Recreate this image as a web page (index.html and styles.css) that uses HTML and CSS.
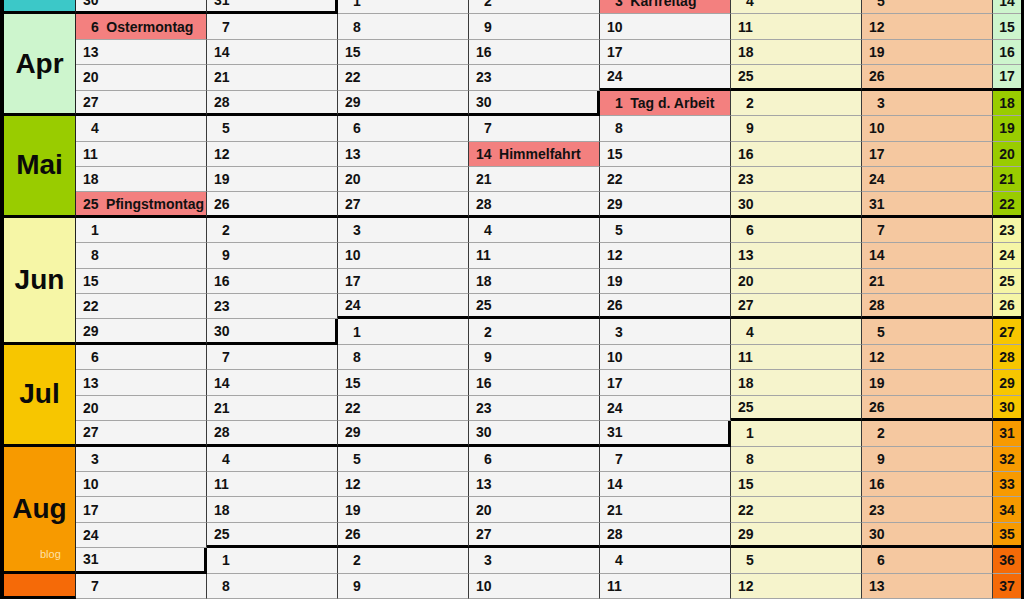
FILE: index.html
```html
<!DOCTYPE html>
<html lang="de">
<head>
<meta charset="utf-8">
<title>Kalender 2015</title>
<link rel="stylesheet" href="styles.css">
</head>
<body>
<div class="cal">
  <!-- KW 14 -->
  <div class="m mar"></div>
  <div class="c bb">30</div><div class="c bb br">31</div><div class="c s">1</div><div class="c s">2</div><div class="c s h">3<span class="hn">Karfreitag</span></div><div class="c s sa">4</div><div class="c s su">5</div><div class="w apr">14</div>
  <!-- April -->
  <div class="m apr r4">Apr</div>
  <div class="c s h">6<span class="hn">Ostermontag</span></div><div class="c s">7</div><div class="c s">8</div><div class="c s">9</div><div class="c">10</div><div class="c sa">11</div><div class="c su">12</div><div class="w apr">15</div>
  <div class="c">13</div><div class="c">14</div><div class="c">15</div><div class="c">16</div><div class="c">17</div><div class="c sa">18</div><div class="c su">19</div><div class="w apr">16</div>
  <div class="c">20</div><div class="c">21</div><div class="c">22</div><div class="c">23</div><div class="c bb">24</div><div class="c sa bb">25</div><div class="c su bb">26</div><div class="w apr bb">17</div>
  <div class="c bb">27</div><div class="c bb">28</div><div class="c bb">29</div><div class="c bb br">30</div><div class="c s h">1<span class="hn">Tag d. Arbeit</span></div><div class="c s sa">2</div><div class="c s su">3</div><div class="w mai">18</div>
  <!-- Mai -->
  <div class="m mai r4">Mai</div>
  <div class="c s">4</div><div class="c s">5</div><div class="c s">6</div><div class="c s">7</div><div class="c s">8</div><div class="c s sa">9</div><div class="c su">10</div><div class="w mai">19</div>
  <div class="c">11</div><div class="c">12</div><div class="c">13</div><div class="c h">14<span class="hn">Himmelfahrt</span></div><div class="c">15</div><div class="c sa">16</div><div class="c su">17</div><div class="w mai">20</div>
  <div class="c">18</div><div class="c">19</div><div class="c">20</div><div class="c">21</div><div class="c">22</div><div class="c sa">23</div><div class="c su">24</div><div class="w mai">21</div>
  <div class="c h bb">25<span class="hn">Pfingstmontag</span></div><div class="c bb">26</div><div class="c bb">27</div><div class="c bb">28</div><div class="c bb">29</div><div class="c sa bb">30</div><div class="c su bb">31</div><div class="w mai bb">22</div>
  <!-- Juni -->
  <div class="m jun r5">Jun</div>
  <div class="c s">1</div><div class="c s">2</div><div class="c s">3</div><div class="c s">4</div><div class="c s">5</div><div class="c s sa">6</div><div class="c s su">7</div><div class="w jun">23</div>
  <div class="c s">8</div><div class="c s">9</div><div class="c">10</div><div class="c">11</div><div class="c">12</div><div class="c sa">13</div><div class="c su">14</div><div class="w jun">24</div>
  <div class="c">15</div><div class="c">16</div><div class="c">17</div><div class="c">18</div><div class="c">19</div><div class="c sa">20</div><div class="c su">21</div><div class="w jun">25</div>
  <div class="c">22</div><div class="c">23</div><div class="c bb">24</div><div class="c bb">25</div><div class="c bb">26</div><div class="c sa bb">27</div><div class="c su bb">28</div><div class="w jun bb">26</div>
  <div class="c bb">29</div><div class="c bb br">30</div><div class="c s">1</div><div class="c s">2</div><div class="c s">3</div><div class="c s sa">4</div><div class="c s su">5</div><div class="w jul">27</div>
  <!-- Juli -->
  <div class="m jul r4">Jul</div>
  <div class="c s">6</div><div class="c s">7</div><div class="c s">8</div><div class="c s">9</div><div class="c">10</div><div class="c sa">11</div><div class="c su">12</div><div class="w jul">28</div>
  <div class="c">13</div><div class="c">14</div><div class="c">15</div><div class="c">16</div><div class="c">17</div><div class="c sa">18</div><div class="c su">19</div><div class="w jul">29</div>
  <div class="c">20</div><div class="c">21</div><div class="c">22</div><div class="c">23</div><div class="c">24</div><div class="c sa bb">25</div><div class="c su bb">26</div><div class="w jul bb">30</div>
  <div class="c bb">27</div><div class="c bb">28</div><div class="c bb">29</div><div class="c bb">30</div><div class="c bb br">31</div><div class="c s sa">1</div><div class="c s su">2</div><div class="w aug">31</div>
  <!-- August -->
  <div class="m aug r5">Aug<span class="blog">blog</span></div>
  <div class="c s">3</div><div class="c s">4</div><div class="c s">5</div><div class="c s">6</div><div class="c s">7</div><div class="c s sa">8</div><div class="c s su">9</div><div class="w aug">32</div>
  <div class="c">10</div><div class="c">11</div><div class="c">12</div><div class="c">13</div><div class="c">14</div><div class="c sa">15</div><div class="c su">16</div><div class="w aug">33</div>
  <div class="c">17</div><div class="c">18</div><div class="c">19</div><div class="c">20</div><div class="c">21</div><div class="c sa">22</div><div class="c su">23</div><div class="w aug">34</div>
  <div class="c">24</div><div class="c bb">25</div><div class="c bb">26</div><div class="c bb">27</div><div class="c bb">28</div><div class="c sa bb">29</div><div class="c su bb">30</div><div class="w aug bb">35</div>
  <div class="c bb br">31</div><div class="c s">1</div><div class="c s">2</div><div class="c s">3</div><div class="c s">4</div><div class="c s sa">5</div><div class="c s su">6</div><div class="w sep">36</div>
  <!-- September -->
  <div class="m sep"></div>
  <div class="c s">7</div><div class="c s">8</div><div class="c s">9</div><div class="c">10</div><div class="c">11</div><div class="c sa">12</div><div class="c su">13</div><div class="w sep">37</div>
</div>
</body>
</html>
```

FILE: styles.css
```css
html, body {
  margin: 0;
  padding: 0;
  height: 600px;
  overflow: hidden;
  background: #ffffff;
}

body {
  font-family: "Liberation Sans", Arial, sans-serif;
}

.cal {
  display: grid;
  grid-template-columns: 72px repeat(7, 131px) 28px;
  grid-template-rows: repeat(24, 25.43px);
  border-left: 4px solid #000;
  border-right: 3px solid #000;
  margin-top: -11px;
  font-weight: bold;
  font-size: 14px;
  color: #111;
}

.c {
  box-sizing: border-box;
  display: flex;
  align-items: center;
  padding-left: 7px;
  background: #f4f4f4;
  border-right: 1px solid #3a3a3a;
  border-bottom: 1px solid #a5a5a5;
  white-space: nowrap;
  overflow: hidden;
}

.s { padding-left: 15px; }

.sa { background: #f6f4cc; }
.su { background: #f5c8a0; }
.h { background: #f3807f; }

.hn { margin-left: 7.5px; }

.w {
  box-sizing: border-box;
  display: flex;
  align-items: center;
  justify-content: center;
  border-bottom: 1px solid #a5a5a5;
}

.m {
  box-sizing: border-box;
  position: relative;
  display: flex;
  align-items: center;
  justify-content: center;
  font-size: 28px;
  color: #0a0a0a;
  border-right: 1px solid #222;
  border-bottom: 3px solid #000;
}

.r4 { grid-row: span 4; }
.r5 { grid-row: span 5; }

.bb { border-bottom: 3px solid #000; }
.br { border-right: 3px solid #000; }

.mar { background: #3cc8c8; }
.apr { background: #cdf5cd; }
.mai { background: #99cc00; }
.jun { background: #f6f6a6; }
.jul { background: #f7c600; }
.aug { background: #f79a00; }
.sep { background: #f56a08; }

.blog {
  position: absolute;
  left: 36px;
  bottom: 11px;
  font-size: 11px;
  font-weight: normal;
  line-height: 11px;
  color: rgba(255, 240, 200, 0.85);
}
```
